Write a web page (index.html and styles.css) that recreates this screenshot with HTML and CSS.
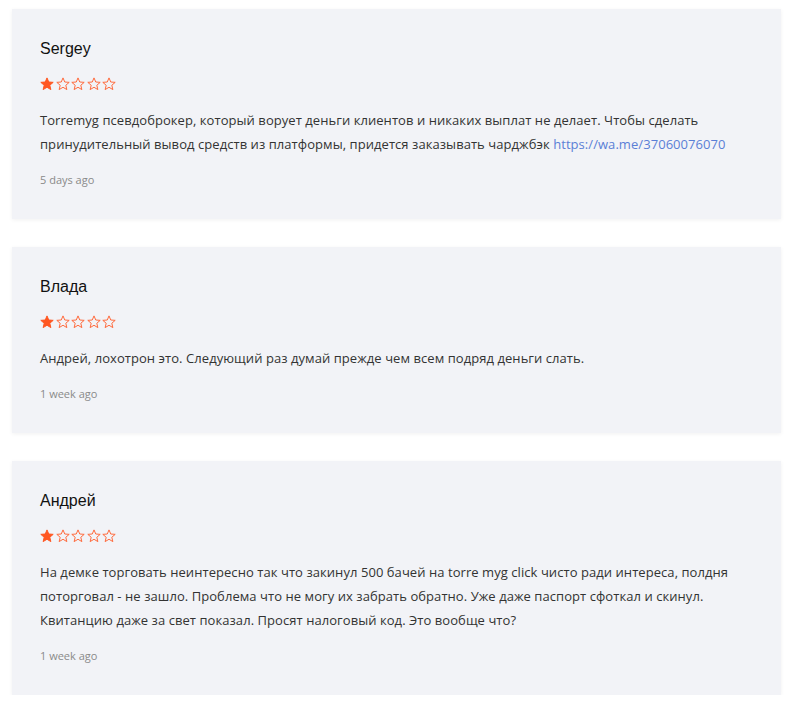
FILE: index.html
```html
<!DOCTYPE html>
<html>
<head>
<meta charset="utf-8">
<link rel="stylesheet" href="styles.css">
</head>
<body>
<svg width="0" height="0" class="defs">
  <defs>
    <path id="star" d="M7 0.9 L8.75 5.0 L13.2 5.35 L9.8 8.25 L10.85 12.6 L7 10.25 L3.15 12.6 L4.2 8.25 L0.8 5.35 L5.25 5.0 Z"/>
  </defs>
</svg>
<div class="list">
  <div class="review">
    <div class="name">Sergey</div>
    <div class="stars">
      <svg class="star full" viewBox="0 0 14 14"><use href="#star"/></svg>
      <svg class="star" viewBox="0 0 14 14"><use href="#star"/></svg>
      <svg class="star" viewBox="0 0 14 14"><use href="#star"/></svg>
      <svg class="star" viewBox="0 0 14 14"><use href="#star"/></svg>
      <svg class="star" viewBox="0 0 14 14"><use href="#star"/></svg>
    </div>
    <p class="text">Torremyg псевдоброкер, который ворует деньги клиентов и никаких выплат не делает. Чтобы сделать принудительный вывод средств из платформы, придется заказывать чарджбэк <a href="#" class="link">https://wa.me/37060076070</a></p>
    <div class="date">5 days ago</div>
  </div>
  <div class="review">
    <div class="name">Влада</div>
    <div class="stars">
      <svg class="star full" viewBox="0 0 14 14"><use href="#star"/></svg>
      <svg class="star" viewBox="0 0 14 14"><use href="#star"/></svg>
      <svg class="star" viewBox="0 0 14 14"><use href="#star"/></svg>
      <svg class="star" viewBox="0 0 14 14"><use href="#star"/></svg>
      <svg class="star" viewBox="0 0 14 14"><use href="#star"/></svg>
    </div>
    <p class="text">Андрей, лохотрон это. Следующий раз думай прежде чем всем подряд деньги слать.</p>
    <div class="date">1 week ago</div>
  </div>
  <div class="review">
    <div class="name">Андрей</div>
    <div class="stars">
      <svg class="star full" viewBox="0 0 14 14"><use href="#star"/></svg>
      <svg class="star" viewBox="0 0 14 14"><use href="#star"/></svg>
      <svg class="star" viewBox="0 0 14 14"><use href="#star"/></svg>
      <svg class="star" viewBox="0 0 14 14"><use href="#star"/></svg>
      <svg class="star" viewBox="0 0 14 14"><use href="#star"/></svg>
    </div>
    <p class="text">На демке торговать неинтересно так что закинул 500 бачей на torre myg click чисто ради интереса, полдня поторговал - не зашло. Проблема что не могу их забрать обратно. Уже даже паспорт сфоткал и скинул. Квитанцию даже за свет показал. Просят налоговый код. Это вообще что?</p>
    <div class="date">1 week ago</div>
  </div>
</div>
</body>
</html>
```

FILE: styles.css
```css
html, body {
  margin: 0;
  padding: 0;
  background: #ffffff;
}
.defs {
  position: absolute;
  width: 0;
  height: 0;
}
.list {
  padding: 9px 15px 0 12px;
  display: flex;
  flex-direction: column;
  gap: 28px;
}
.review {
  background: #f2f3f7;
  box-shadow: 0 1px 4px rgba(0, 0, 0, 0.06);
  padding: 29px 28px 31px 28px;
}
.name {
  font-family: "Liberation Sans", Arial, sans-serif;
  font-size: 16px;
  line-height: 22px;
  color: #111111;
}
.stars {
  display: flex;
  gap: 1.5px;
  margin-top: 17px;
  height: 14px;
}
.star {
  width: 14px;
  height: 14px;
  fill: none;
  stroke: #ff6a3d;
  stroke-width: 1;
  stroke-linejoin: round;
}
.star.full {
  fill: #ff5722;
  stroke: #ff5722;
}
.text {
  margin: 17px 0 0 0;
  font-family: "Open Sans", sans-serif;
  font-size: 13px;
  letter-spacing: 0.06px;
  line-height: 24px;
  color: #333333;
}
.link {
  color: #5b7fd6;
  text-decoration: none;
}
.date {
  margin-top: 16px;
  font-family: "Open Sans", sans-serif;
  font-size: 11px;
  line-height: 16px;
  color: #8a8a8a;
}
```
